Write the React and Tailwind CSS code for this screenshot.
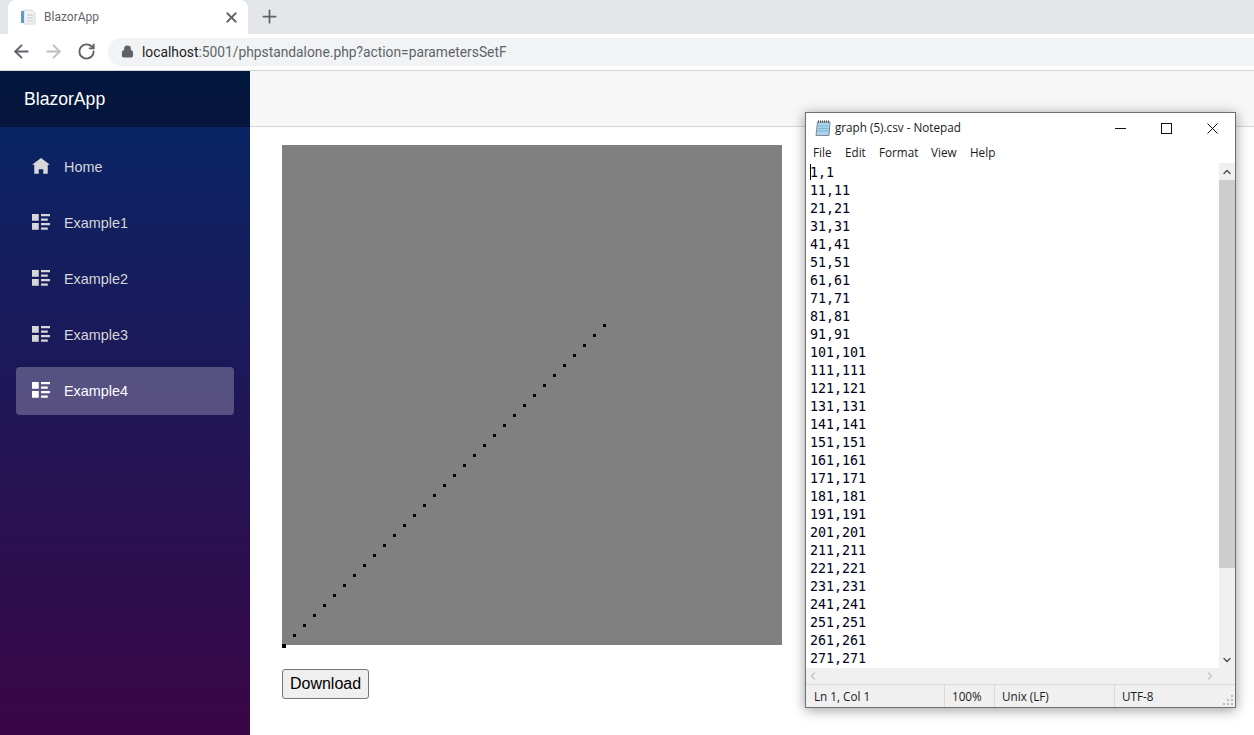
import { ArrowLeft, ArrowRight, RotateCw, Lock, Plus, X, ChevronUp, ChevronDown, ChevronLeft, ChevronRight } from "lucide-react";

const navItems = ["Home", "Example1", "Example2", "Example3", "Example4"];
const values = Array.from({ length: 33 }, (_, i) => i * 10 + 1);
const csvLines = Array.from({ length: 28 }, (_, i) => `${i * 10 + 1},${i * 10 + 1}`);

const HomeIcon = () => (
  <svg width="18" height="18" viewBox="0 0 8 8" className="fill-current block">
    <path d="M4 0l-4 3h1v4h2v-2h2v2h2v-4.03l1 .03-4-3z" />
  </svg>
);

const ListRichIcon = () => (
  <svg width="18" height="18" viewBox="0 0 8 8" className="fill-current block">
    <path d="M0 0v3h3v-3h-3zm4 0v1h4v-1h-4zm0 2v1h3v-1h-3zm-4 2v3h3v-3h-3zm4 0v1h4v-1h-4zm0 2v1h3v-1h-3z" />
  </svg>
);

const Favicon = () => (
  <svg width="16" height="16" viewBox="0 0 16 16">
    <path d="M4 1h8l3 3v11H4z" fill="#f1f2f4" stroke="#d5d8db" strokeWidth="1" />
    <rect x="1" y="2" width="3" height="12" fill="#5b9bd5" />
    <path d="M7 6h6M7 9h6M7 12h6" stroke="#c4c9ce" strokeWidth="1" />
  </svg>
);

const NotepadIcon = () => (
  <svg width="16" height="16" viewBox="0 0 16 16">
    <path d="M2.5 2h12.5l-1 13.5H1z" fill="#a9d3ea" stroke="#7c8a94" strokeWidth="1" />
    <path d="M3 6h10.5M3 8.5h10.5M2.5 11h11" stroke="#7db4d3" strokeWidth="1" />
    <path d="M3 1.5h12" stroke="#4c4c4c" strokeWidth="2" strokeDasharray="1 1" />
  </svg>
);

const Graph = () => (
  <svg width="500" height="500" className="bg-[#808080] block overflow-visible">
    <rect x="0" y="499" width="4" height="4" fill="#000" />
    {values.map((v) => (
      <rect key={v} x={v} y={500 - v} width="3" height="3" fill="#000" />
    ))}
  </svg>
);

const Notepad = () => (
  <div className="absolute left-[805px] top-[112px] w-[431px] h-[596px] flex flex-col bg-[#f0f0f0] border border-[#6f6f6f] shadow-[0_2px_12px_rgba(0,0,0,0.4)] font-['Open_Sans','Noto_Sans',sans-serif] text-[#1a1a1a]">
    <div className="h-[30px] bg-white flex items-center pl-[9px] shrink-0">
      <NotepadIcon />
      <span className="ml-[4px] text-[11.7px]">graph (5).csv - Notepad</span>
      <div className="ml-auto flex items-center text-[#111]">
        <div className="w-[46px] flex justify-center">
          <svg width="11" height="11" viewBox="0 0 11 11"><path d="M0 5.5h11" stroke="currentColor" strokeWidth="1" /></svg>
        </div>
        <div className="w-[46px] flex justify-center">
          <svg width="11" height="11" viewBox="0 0 11 11"><rect x="0.5" y="0.5" width="10" height="10" fill="none" stroke="currentColor" strokeWidth="1" /></svg>
        </div>
        <div className="w-[46px] flex justify-center">
          <svg width="11" height="11" viewBox="0 0 11 11"><path d="M0.5 0.5l10 10M10.5 0.5l-10 10" stroke="currentColor" strokeWidth="1" /></svg>
        </div>
      </div>
    </div>
    <div className="h-[20px] bg-white flex items-center text-[11.7px] pl-[7px] shrink-0">
      <span className="w-[32px]">File</span>
      <span className="w-[34px]">Edit</span>
      <span className="w-[52px]">Format</span>
      <span className="w-[39px]">View</span>
      <span>Help</span>
    </div>
    <div className="flex flex-1 min-h-0">
      <div className="relative flex-1 bg-white overflow-hidden pl-[4px] pt-[1px] font-['DejaVu_Sans_Mono',monospace] text-[13.3px] leading-[18px] text-[#000020]">
        <div className="absolute left-[4px] top-[1px] w-px h-[16px] bg-black" />
        {csvLines.map((line) => (
          <div key={line}>{line}</div>
        ))}
      </div>
      <div className="w-[16px] flex flex-col items-center shrink-0">
        <div className="h-[17px] flex items-center justify-center"><ChevronUp size={12} strokeWidth={3} className="text-[#555]" /></div>
        <div className="w-full h-[388px] bg-[#cdcdcd]" />
        <div className="mt-auto h-[17px] flex items-center justify-center"><ChevronDown size={12} strokeWidth={3} className="text-[#555]" /></div>
      </div>
    </div>
    <div className="h-[16px] flex items-center justify-between px-[1px] pr-[19px] shrink-0">
      <ChevronLeft size={12} strokeWidth={3} className="text-[#c4c4c4]" />
      <ChevronRight size={12} strokeWidth={3} className="text-[#c4c4c4]" />
    </div>
    <div className="relative h-[23px] flex items-center border-t border-[#d9d9d9] text-[11.7px] shrink-0">
      <div className="w-[138px] pl-[8px] pt-[2px]">Ln 1, Col 1</div>
      <div className="w-[50px] pl-[7px] pt-[2px] h-full flex items-center border-l border-[#d9d9d9]">100%</div>
      <div className="w-[120px] pl-[7px] pt-[2px] h-full flex items-center border-l border-[#d9d9d9]">Unix (LF)</div>
      <div className="pl-[7px] pt-[2px] h-full flex items-center border-l border-[#d9d9d9]">UTF-8</div>
      <svg width="12" height="12" viewBox="0 0 12 12" className="absolute right-[1px] bottom-[1px] fill-[#bdbdbd]">
        <rect x="9" y="1" width="2" height="2" />
        <rect x="5" y="5" width="2" height="2" />
        <rect x="9" y="5" width="2" height="2" />
        <rect x="1" y="9" width="2" height="2" />
        <rect x="5" y="9" width="2" height="2" />
        <rect x="9" y="9" width="2" height="2" />
      </svg>
    </div>
  </div>
);

const BrowserChrome = () => (
  <div className="shrink-0 font-['Roboto','Open_Sans',sans-serif]">
    <div className="h-[34px] bg-[#e4e7ea] flex items-end pl-[8px]">
      <div className="w-[240px] h-[34px] bg-white rounded-t-[8px] flex items-center pl-[12px] pr-[8px]">
        <Favicon />
        <span className="ml-[8px] text-[12px] text-[#5f6368]">BlazorApp</span>
        <X size={17} strokeWidth={2.6} className="ml-auto text-[#5f6368]" />
      </div>
      <Plus size={21} strokeWidth={2} className="ml-[11px] mb-[7px] text-[#5f6368]" />
    </div>
    <div className="h-[37px] bg-white border-b border-[#d3d3d3] flex items-center pl-[11px] pb-[1px]">
      <ArrowLeft size={21} strokeWidth={2.2} className="text-[#5f6368]" />
      <ArrowRight size={21} strokeWidth={2.2} className="ml-[11px] text-[#bcbec0]" />
      <RotateCw size={19} strokeWidth={2.4} className="ml-[13px] text-[#5f6368]" />
      <div className="ml-[12px] flex-1 h-[28px] bg-[#f1f3f4] rounded-l-full flex items-center pl-[13px]">
        <Lock size={13} strokeWidth={2.5} className="text-[#5f6368] fill-[#5f6368]" />
        <span className="ml-[8px] mt-[1px] text-[13.8px] text-[#5f6368]">
          <span className="text-[#202124]">localhost</span>:5001/phpstandalone.php?action=parametersSetF
        </span>
      </div>
    </div>
  </div>
);

const Sidebar = () => (
  <div className="w-[250px] shrink-0 bg-linear-to-b/srgb from-[#052767] to-[#3a0647]">
    <div className="h-[56px] bg-black/40 flex items-center pl-[24px] text-[17.6px] text-white">BlazorApp</div>
    <div className="flex flex-col gap-[8px] pt-[16px] px-[16px]">
      {navItems.map((item) => {
        const active = item === "Example4";
        return (
          <div
            key={item}
            className={`h-[48px] rounded-[4px] flex items-center pl-[16px] text-[14.4px] ${
              active ? "bg-white/25 text-white" : "text-[#d7d7d7]"
            }`}
          >
            <div className="w-[32px] shrink-0">{item === "Home" ? <HomeIcon /> : <ListRichIcon />}</div>
            <span className="mt-[2px]">{item}</span>
          </div>
        );
      })}
    </div>
  </div>
);

const App = () => {
  return (
    <div className="relative h-screen overflow-hidden flex flex-col bg-white font-['Liberation_Sans',Arial,sans-serif]">
      <BrowserChrome />
      <div className="flex flex-1 min-h-0">
        <Sidebar />
        <div className="flex-1 min-w-0">
          <div className="h-[56px] bg-[#f7f7f7] border-b border-[#d6d5d5]" />
          <div className="pl-[32px] pt-[18px]">
            <Graph />
            <button className="mt-[24px] h-[30px] w-[87px] bg-[#efefef] border border-[#767676] rounded-[3px] text-[16px] text-black">
              Download
            </button>
          </div>
        </div>
      </div>
      <Notepad />
    </div>
  );
};

export default App;
